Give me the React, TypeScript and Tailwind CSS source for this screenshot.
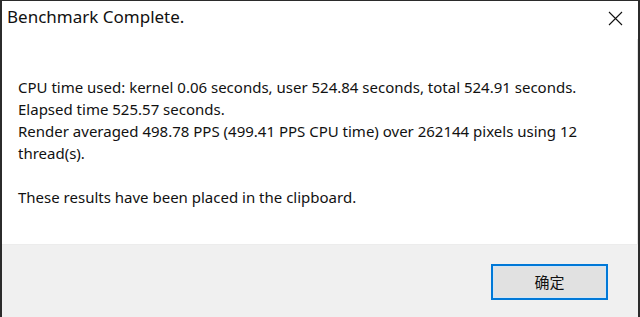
export default function App() {
  return (
    <div className="h-[317px] w-[640px] overflow-hidden bg-white font-['Noto_Sans','Noto_Sans_CJK_SC',sans-serif] text-black">
      <div className="flex h-full flex-col border-t border-l-2 border-r-2 border-[#2b2b2b]">
        {/* Title bar */}
        <div className="flex h-[38px] items-start justify-between pl-[5px] pr-[15px]">
          <div className="pt-[4px] text-[17px] leading-[24px] text-[#111]">Benchmark Complete.</div>
          <svg width="15" height="15" viewBox="0 0 15 15" className="mt-[10px]">
            <path d="M1 1 L14 14 M14 1 L1 14" stroke="#111" strokeWidth="1.1" />
          </svg>
        </div>

        {/* Message */}
        <div className="flex-1 border-r border-[#e4e4e4] pl-[16px] pt-[37px] text-[15px] leading-[22px] text-[#111]">
          <p className="whitespace-nowrap">
            CPU time used: kernel 0.06 seconds, user 524.84 seconds, total 524.91 seconds.
          </p>
          <p className="whitespace-nowrap">Elapsed time 525.57 seconds.</p>
          <p className="whitespace-nowrap">
            Render averaged 498.78 PPS (499.41 PPS CPU time) over 262144 pixels using 12
          </p>
          <p className="whitespace-nowrap">thread(s).</p>
          <p className="mt-[22px] whitespace-nowrap">These results have been placed in the clipboard.</p>
        </div>

        {/* Button row */}
        <div className="flex h-[73px] items-start justify-end border-t border-[#ececec] bg-[#f0f0f0] pr-[30px] pt-[19px]">
          <button className="flex h-[36px] w-[117px] items-center justify-center border-2 border-[#0078d7] bg-[#e1e1e1] text-[15px] text-[#111] shadow-[inset_0_0_0_1px_#cfe5f7]">
            确定
          </button>
        </div>
      </div>
    </div>
  );
}
